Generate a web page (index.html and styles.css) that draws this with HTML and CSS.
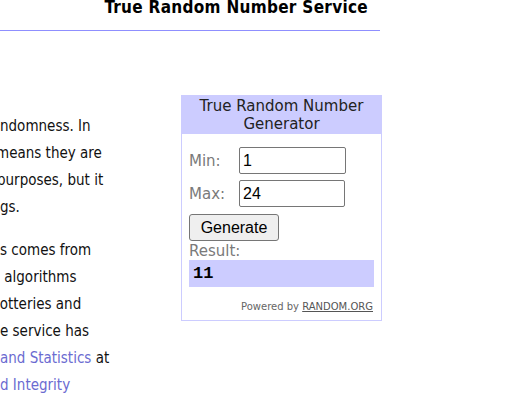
FILE: index.html
```html
<!DOCTYPE html>
<html lang="en">
<head>
<meta charset="utf-8">
<title>True Random Number Service</title>
<link rel="stylesheet" href="styles.css">
</head>
<body>
<div class="page">
  <header class="masthead">
    <h1 class="title">True Random Number Service</h1>
  </header>
  <main class="content">
    <div class="article">
      <p class="para">
        <span class="line l1">ndomness. In</span>
        <span class="line l2">means they are</span>
        <span class="line l3">purposes, but it</span>
        <span class="line l4">gs.</span>
      </p>
      <p class="para">
        <span class="line l5">s comes from</span>
        <span class="line l6">&nbsp;algorithms</span>
        <span class="line l7">lotteries and</span>
        <span class="line l8">e service has</span>
        <span class="line l9"><a class="link" href="#">and Statistics</a> at</span>
        <span class="line l10"><a class="link" href="#">d Integrity</a></span>
      </p>
    </div>
    <aside class="widget">
      <div class="widget-head">True Random Number Generator</div>
      <form class="widget-body">
        <div class="field">
          <label class="label" for="min">Min:</label>
          <input class="input input-min" id="min" type="text" value="1">
        </div>
        <div class="field">
          <label class="label" for="max">Max:</label>
          <input class="input input-max" id="max" type="text" value="24">
        </div>
        <button class="btn" type="button">Generate</button>
        <div class="label result-label">Result:</div>
        <div class="result">11</div>
        <div class="powered">Powered by <a class="powered-link" href="#">RANDOM.ORG</a></div>
      </form>
    </aside>
  </main>
</div>
</body>
</html>
```
FILE: styles.css
```css
html, body {
  margin: 0;
  padding: 0;
  background: #fff;
}
body {
  font-family: "DejaVu Sans", Verdana, sans-serif;
  color: #111;
  overflow: hidden;
}
.page {
  width: 380px;
}
.masthead {
  height: 30px;
  border-bottom: 1px solid #8f8fff;
  display: flex;
  justify-content: flex-end;
  padding-right: 12px;
}
.title {
  margin: -3px 0 0 0;
  font-size: 17px;
  line-height: 20px;
  font-weight: bold;
  font-stretch: semi-condensed;
  letter-spacing: 0.3px;
  color: #000;
}
.content {
  display: flex;
  padding-top: 64px;
}
.article {
  width: 181px;
  flex: none;
  padding-top: 18px;
  font-size: 15px;
  font-stretch: semi-condensed;
  line-height: 27px;
  overflow: hidden;
}
.para {
  margin: 0 0 16px 0;
}
.line {
  display: block;
  white-space: nowrap;
}
.l2 { margin-left: -4px; }
.l3 { margin-left: -3px; }
.l7 { margin-left: -4px; }
.link {
  color: #6b6bd1;
  text-decoration: none;
}
.widget {
  flex: none;
  width: 199px;
  border: 1px solid #ccccff;
  align-self: flex-start;
}
.widget-head {
  background: #ccccff;
  text-align: center;
  font-size: 15px;
  line-height: 18px;
  padding: 1px 6px 1px;
  color: #222;
}
.widget-body {
  padding: 13px 7px 8px 7px;
  display: flex;
  flex-direction: column;
}
.field {
  display: flex;
  align-items: center;
  margin-bottom: 6px;
}
.label {
  font-size: 15px;
  color: #7a7a7a;
  width: 50px;
}
.input {
  font-family: "Liberation Sans", Arial, sans-serif;
  font-size: 16px;
  height: 27px;
  box-sizing: border-box;
  border: 1px solid #767676;
  border-radius: 2px;
  padding: 1px 3px;
  color: #000;
}
.input-min { width: 107px; }
.input-max { width: 106px; }
.btn {
  align-self: flex-start;
  margin-top: 1px;
  width: 90px;
  height: 27px;
  font-family: "Liberation Sans", Arial, sans-serif;
  font-size: 16px;
  color: #000;
  background: #efefef;
  border: 1px solid #767676;
  border-radius: 3px;
  padding: 0;
}
.result-label {
  margin-top: 1px;
  line-height: 18px;
}
.result {
  background: #ccccff;
  height: 27px;
  line-height: 27px;
  padding-left: 4px;
  font-family: "Liberation Mono", "DejaVu Sans Mono", monospace;
  font-size: 17px;
  font-weight: bold;
  color: #000;
}
.powered {
  margin-top: 14px;
  text-align: right;
  font-size: 10px;
  color: #666;
  padding-right: 1px;
}
.powered-link {
  color: #555;
  text-decoration: underline;
}
```
